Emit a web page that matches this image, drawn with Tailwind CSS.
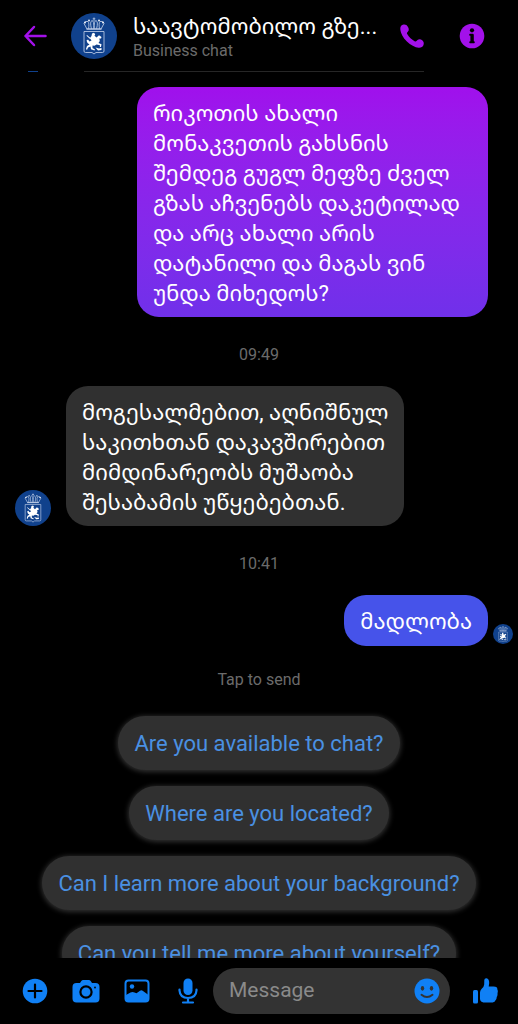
<!DOCTYPE html>
<html lang="ka">
<head>
  <meta charset="UTF-8">
  <meta name="viewport" content="width=device-width, initial-scale=1.0">
  <title>Business chat</title>
  <script src="https://cdn.jsdelivr.net/npm/@tailwindcss/browser@4"></script>
</head>
<body class="bg-black text-white font-['Roboto','Noto_Sans_Georgian','DejaVu_Sans',sans-serif]">
  <!-- page avatar, reused in the header and next to messages -->
  <svg class="hidden">
    <symbol id="crest" viewBox="0 0 46 46">
      <circle cx="23" cy="23" r="23" fill="#10418c"/>
      <g fill="none" stroke="#b4c5e2" stroke-width="0.900">
        <path d="M16 16 13 10.500Q14 7.500 17 8.500Q18.500 10 17.500 16M30 16 33 10.500Q32 7.500 29 8.500Q27.500 10 28.500 16M20.500 16Q18.500 8.500 21 7.500Q23 7.500 23 16Q23 7.500 25 7.500Q27.500 8.500 25.500 16"/>
        <path d="M23 4.500V8M21.700 5.800H24.300"/>
        <path d="M15.500 16H30.500" stroke-width="1.600"/>
        <path d="M13 18.500H33V38Q33 39.500 31.500 39.500H25L23 41 21 39.500H14.500Q13 39.500 13 38Z"/>
      </g>
      <g fill="#fff">
        <path d="M21 20.500 23 19.800 24.200 21.200 23.500 22.800 25.500 24.500 28 22.200 30.500 24 30 25.500 28.300 25.500 28.800 28 27.500 30 30.500 31.200 30 34 28.800 34 29 32.300 25.500 31.500 23.500 32.800 21.500 32.500 21.500 35 24 36.500 23.500 37.500 20 36.200 19.500 33.500 17 34.500 16 37 15 36 16 33 18.500 31.500 16.500 30 15.500 27.500 17 26.500 18.500 28.500 20.500 27.500 19 25 20.500 23Z"/>
        <path d="M24.500 34.500 28 35.500 30.500 35 30.500 37 27 37.500Z"/>
        <path d="M16 22 20 25.500 19.300 26.200 15.500 22.800Z"/>
        <circle cx="14" cy="9.500" r="0.900"/><circle cx="32" cy="9.500" r="0.900"/><circle cx="18" cy="7.500" r="0.900"/><circle cx="28" cy="7.500" r="0.900"/>
      </g>
    </symbol>
  </svg>

  <div class="flex h-screen flex-col">
    <header class="flex h-[71px] shrink-0 items-center pl-5 pr-8">
      <button type="button" aria-label="Back" class="w-[30px]">
        <svg class="h-[30px] w-[30px]" viewBox="0 0 30 30" fill="none" stroke="#a311ea" stroke-width="2.500" stroke-linecap="round" stroke-linejoin="round">
          <path d="M25.500 15H5.500M14 6 5.500 15 14 24"/>
        </svg>
      </button>
      <svg class="ml-[21px] h-[46px] w-[46px] shrink-0"><use href="#crest"/></svg>
      <div class="ml-4 min-w-0 flex-1 pt-[2px]">
        <h1 class="truncate text-[22px] leading-7">საავტომობილო გზე...</h1>
        <p class="text-base leading-5 text-[#6b6b6b]">Business chat</p>
      </div>
      <button type="button" aria-label="Call" class="ml-5">
        <svg class="h-7 w-7" viewBox="0 0 28 28" fill="#a311ea">
          <path d="M4.800 2.700C3.100 3.200 2.200 4.900 2.300 7C2.500 11 5.200 16 8.900 19.500C12.600 23 17 25.500 20.700 25.800C23 26 24.800 24.800 25.500 23C26.200 21 25.600 19.300 24.200 18.200C22.600 16.900 20.800 16.800 19.500 18.100L18.500 19.100C18 19.600 17.300 19.700 16.600 19.300C13.700 17.600 11 15 9.200 12C8.800 11.300 8.800 10.700 9.400 10.200L10 9.500C11 8.300 11 6.700 10 4.900C8.900 2.800 7 2 4.800 2.700Z"/>
        </svg>
      </button>
      <button type="button" aria-label="Info" class="ml-8">
        <svg class="h-7 w-7" viewBox="0 0 28 28">
          <circle cx="14" cy="14" r="12.300" fill="#a311ea"/>
          <circle cx="14" cy="8.300" r="2.100"/>
          <path d="M11.900 11.800H14.700Q15.800 11.800 15.800 12.900V19.200H16Q16.800 19.200 16.800 20.200T16 21.200H12.100Q11.300 21.200 11.300 20.200T12.100 19.200H12.400V13.800H11.900Q11.200 13.800 11.200 12.800T11.900 11.800Z"/>
        </svg>
      </button>
    </header>

    <main class="flex min-h-0 flex-1 flex-col overflow-hidden">
      <!-- lower edge of the message scrolled under the header -->
      <div class="flex h-px shrink-0">
        <span class="ml-7 w-[10px] bg-[#10418c]"></span>
        <span class="ml-[46px] mr-[94px] flex-1 bg-[#262626]"></span>
      </div>

      <p class="mr-[30px] mt-[15px] shrink-0 self-end rounded-[22px] bg-linear-to-b from-[#a010ec] to-[#7030ea] pt-3 pb-2 pl-4 pr-7 text-[22px] leading-[30px]">რიკოთის ახალი<br>მონაკვეთის გახსნის<br>შემდეგ გუგლ მეფზე ძველ<br>გზას აჩვენებს დაკეტილად<br>და არც ახალი არის<br>დატანილი და მაგას ვინ<br>უნდა მიხედოს?</p>

      <time class="mt-7 shrink-0 text-center text-base leading-5 text-[#6b6b6b]">09:49</time>

      <div class="mt-[21px] flex shrink-0 items-end pl-[15px]">
        <svg class="h-9 w-9 shrink-0"><use href="#crest"/></svg>
        <p class="ml-[15px] rounded-[22px] bg-[#303030] px-4 pt-3 pb-2 text-[22px] leading-[30px]">მოგესალმებით, აღნიშნულ<br>საკითხთან დაკავშირებით<br>მიმდინარეობს მუშაობა<br>შესაბამის უწყებებთან.</p>
      </div>

      <time class="mt-7 shrink-0 text-center text-base leading-5 text-[#6b6b6b]">10:41</time>

      <div class="mt-[21px] flex shrink-0 items-end justify-end pr-[5px]">
        <p class="rounded-[22px] bg-[#4653ea] px-4 pt-3 pb-[9px] text-[22px] leading-[30px]">მადლობა</p>
        <svg class="mb-[2px] ml-[5px] h-5 w-5 shrink-0"><use href="#crest"/></svg>
      </div>

      <p class="mt-6 shrink-0 text-center text-base leading-5 text-[#6b6b6b]">Tap to send</p>

      <div class="mt-[26px] flex flex-col items-center gap-4 text-[22px] leading-[30px] text-[#4a90e2]">
        <button type="button" class="rounded-full bg-[#303030] px-4 pt-[13px] pb-[11px] shadow-[0_1px_5px_1px_#303030]">Are you available to chat?</button>
        <button type="button" class="rounded-full bg-[#303030] px-4 pt-[13px] pb-[11px] shadow-[0_1px_5px_1px_#303030]">Where are you located?</button>
        <button type="button" class="rounded-full bg-[#303030] px-4 pt-[13px] pb-[11px] shadow-[0_1px_5px_1px_#303030]">Can I learn more about your background?</button>
        <button type="button" class="rounded-full bg-[#303030] px-4 pt-[13px] pb-[11px] shadow-[0_1px_5px_1px_#303030]">Can you tell me more about yourself?</button>
      </div>
    </main>

    <footer class="flex h-[66px] shrink-0 items-center pl-5 pr-[18px] text-[#1080f5]">
      <div class="flex gap-[21px]">
        <button type="button" aria-label="More">
          <svg class="h-[30px] w-[30px]" viewBox="0 0 30 30">
            <circle cx="15" cy="15" r="12.300" fill="currentColor"/>
            <path d="M15 8.500V21.500M8.500 15H21.500" stroke="#000" stroke-width="2.200" stroke-linecap="round"/>
          </svg>
        </button>
        <button type="button" aria-label="Camera">
          <svg class="h-[30px] w-[30px]" viewBox="0 0 30 30">
            <path d="M9 7 10.300 5Q11 4 12.200 4H17.800Q19 4 19.700 5L21 7H24.500Q28.500 7 28.500 11V22.500Q28.500 26.500 24.500 26.500H5.500Q1.500 26.500 1.500 22.500V11Q1.500 7 5.500 7Z" fill="currentColor"/>
            <circle cx="15" cy="16" r="5.600" fill="none" stroke="#000" stroke-width="2.200"/>
            <circle cx="24" cy="11.500" r="0.900" fill="#000"/>
          </svg>
        </button>
        <button type="button" aria-label="Gallery">
          <svg class="h-[30px] w-[30px]" viewBox="0 0 30 30">
            <rect x="3.500" y="4.500" width="23" height="21" rx="3" fill="none" stroke="currentColor" stroke-width="2"/>
            <circle cx="10" cy="10.500" r="2.200" fill="currentColor"/>
            <path d="M4 19 8.500 16.500Q10.500 15.500 12.500 16.500L14.500 17.300 18 14.800Q19.500 13.800 21 15L26.500 19V23Q26.500 25.500 24.500 25.500H6Q4 25.500 4 23Z" fill="currentColor"/>
          </svg>
        </button>
        <button type="button" aria-label="Voice message">
          <svg class="h-[30px] w-[30px]" viewBox="0 0 30 30" fill="none" stroke="currentColor" stroke-width="2.200" stroke-linecap="round">
            <rect x="10.500" y="2.500" width="9" height="16.500" rx="4.500" fill="currentColor" stroke="none"/>
            <path d="M6.500 13.500V14.500Q7 22 15 22T23.500 14.500V13.500M15 22V26M10 26.500H20"/>
          </svg>
        </button>
      </div>
      <div class="ml-[10px] flex h-[46px] min-w-0 flex-1 items-center rounded-full bg-[#333] pl-4 pr-2">
        <input type="text" aria-label="Message" placeholder="Message" class="min-w-0 flex-1 bg-transparent text-[21px] text-white outline-none placeholder:text-[#8a8a8a]">
        <button type="button" aria-label="Emoji">
          <svg class="h-[30px] w-[30px]" viewBox="0 0 30 30">
            <circle cx="15" cy="15" r="12.500" fill="currentColor"/>
            <ellipse cx="10.500" cy="12.300" rx="1.700" ry="2.400" fill="#333"/>
            <ellipse cx="19.500" cy="12.300" rx="1.700" ry="2.400" fill="#333"/>
            <path d="M9.500 18.800Q15 23.300 20.500 18.800" fill="none" stroke="#333" stroke-width="2" stroke-linecap="round"/>
          </svg>
        </button>
      </div>
      <button type="button" aria-label="Like" class="ml-5">
        <svg class="h-[30px] w-[30px]" viewBox="0 0 30 30" fill="currentColor">
          <rect x="3" y="14" width="5" height="13.500" rx="1.500"/>
          <path d="M10 16.500Q10 14.500 11.500 13Q14 11 14.200 8.500L14.300 4Q14.500 2 16.500 2.200Q19.300 2.800 19.200 7L18.700 10.500H23.500C26.500 10.500 27.500 11.500 27.300 13.200C28 14.300 28 16 27.500 17C27.700 18.500 27.500 20 26.700 21C26.700 22.500 26.300 23.700 25.300 24.500C24.800 26 23.500 26.600 21 26.600H16C12 26.600 10 25.500 10 23Z"/>
        </svg>
      </button>
    </footer>
  </div>
</body>
</html>
